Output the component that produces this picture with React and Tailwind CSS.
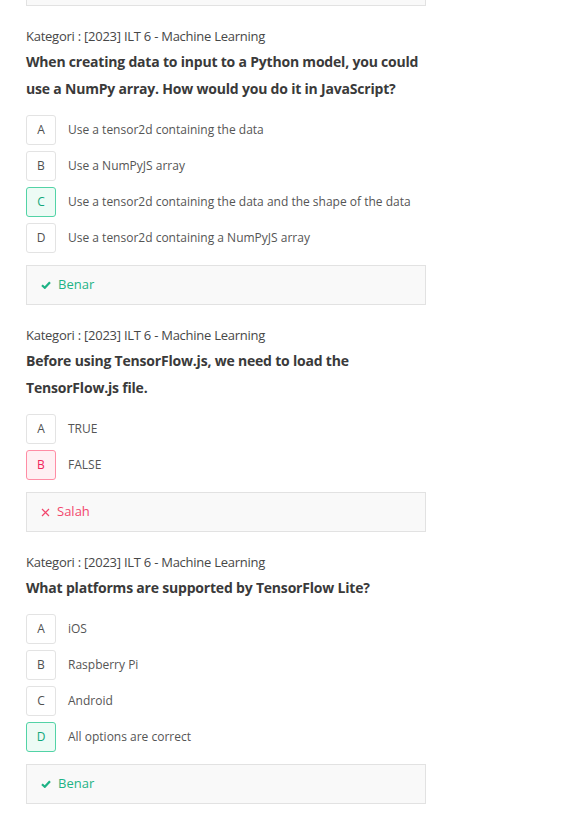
import React from "react";

const questions = [
  {
    cat: "Kategori : [2023] ILT 6 - Machine Learning",
    q: "When creating data to input to a Python model, you could use a NumPy array. How would you do it in JavaScript?",
    options: [
      "Use a tensor2d containing the data",
      "Use a NumPyJS array",
      "Use a tensor2d containing the data and the shape of the data",
      "Use a tensor2d containing a NumPyJS array",
    ],
    selected: 2,
    correct: true,
  },
  {
    cat: "Kategori : [2023] ILT 6 - Machine Learning",
    q: "Before using TensorFlow.js, we need to load the TensorFlow.js file.",
    options: ["TRUE", "FALSE"],
    selected: 1,
    correct: false,
  },
  {
    cat: "Kategori : [2023] ILT 6 - Machine Learning",
    q: "What platforms are supported by TensorFlow Lite?",
    options: ["iOS", "Raspberry Pi", "Android", "All options are correct"],
    selected: 3,
    correct: true,
  },
];

const letters = ["A", "B", "C", "D"];

function Check() {
  return (
    <svg width="10" height="8" viewBox="0 0 10 8" className="shrink-0">
      <path d="M1 4.2 L3.8 6.8 L9 1.2" fill="none" stroke="#1eb386" strokeWidth="2.2" />
    </svg>
  );
}

function Cross() {
  return (
    <svg width="9" height="9" viewBox="0 0 9 9" className="shrink-0">
      <path d="M1 1 L8 8 M8 1 L1 8" fill="none" stroke="#f2476d" strokeWidth="1.2" />
    </svg>
  );
}

function Question({ data }) {
  return (
    <div className="mt-[20px]">
      <div className="text-[13px] leading-[20px] font-medium tracking-[-0.25px] text-[#474747]">{data.cat}</div>
      <div className="mt-[2px] text-[14px] leading-[27px] font-bold tracking-[-0.2px] text-[#3a3a3a] w-[400px]">{data.q}</div>
      <div className="mt-[13px] flex flex-col gap-[6px]">
        {data.options.map((o, i) => {
          const sel = i === data.selected;
          let box = "border-[#e3e3e3] bg-white text-[#505050]";
          if (sel && data.correct) box = "border-[#52d3a6] bg-[#edfbf5] text-[#10a87a]";
          if (sel && !data.correct) box = "border-[#ff8da5] bg-[#fff0f3] text-[#f0255c]";
          return (
            <div key={i} className="flex items-center h-[30px]">
              <div className={`w-[30px] h-[30px] rounded-[3px] border flex items-center justify-center text-[12px] ${box}`}>
                {letters[i]}
              </div>
              <div className="ml-[12px] text-[12px] text-[#555555]">{o}</div>
            </div>
          );
        })}
      </div>
      <div className="mt-[12px] w-[400px] h-[40px] border border-[#e2e2e2] bg-[#f9f9f9] flex items-center pl-[14px] gap-[7px]">
        {data.correct ? <Check /> : <Cross />}
        <span className={`text-[13px] font-medium ${data.correct ? "text-[#1eb386]" : "text-[#f2476d]"}`}>
          {data.correct ? "Benar" : "Salah"}
        </span>
      </div>
    </div>
  );
}

export default function App() {
  return (
    <div className="w-[565px] h-[815px] bg-white font-['Open_Sans',sans-serif] overflow-hidden pl-[26px]">
      <div className="w-[400px] h-[6px] border-x border-b border-[#e2e2e2] bg-[#f9f9f9]" />
      {questions.map((q, i) => (
        <Question key={i} data={q} />
      ))}
    </div>
  );
}
